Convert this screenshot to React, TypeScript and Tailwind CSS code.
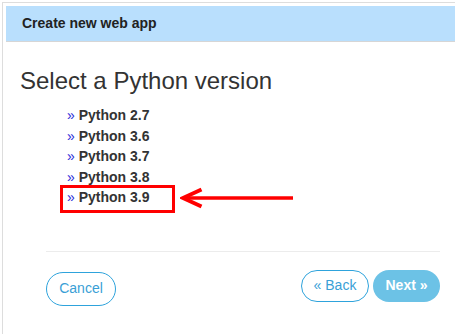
const versions = ['2.7', '3.6', '3.7', '3.8', '3.9'];

export default function App() {
  return (
    <div className="h-[334px] w-[455px] overflow-hidden bg-white font-['Liberation_Sans',Arial,sans-serif]">
      <div className="ml-[2px] mt-[2px] h-[400px] w-[480px] border-l border-t border-[#dddddd] p-[3px]">
        {/* header band */}
        <div className="flex h-[36px] items-center border-b border-[#d6d6d6] bg-[#b9dffd] pl-[16px] text-[14px] font-bold text-[#222]">
          Create new web app
        </div>

        <div className="relative pt-[25px]">
          <h1 className="ml-[14px] text-[24px] leading-[28px] text-[#333]">Select a Python version</h1>

          <ul className="mt-[10px] pl-[61px] text-[14px] leading-[20.5px]">
            {versions.map((v) => (
              <li key={v}>
                <span className="text-[#2b2bd8]">» </span>
                <span className="font-bold text-[#333]">Python {v}</span>
              </li>
            ))}
          </ul>

          {/* highlight box + arrow */}
          <div className="absolute left-[54px] top-[143px] h-[28px] w-[115px] border-[3px] border-[#ff0000]" />
          <svg className="absolute left-[174px] top-[144px]" width="116" height="25" viewBox="0 0 116 25">
            <line x1="3" y1="12" x2="113" y2="12" stroke="#ff0000" strokeWidth="3.5" />
            <polyline points="21.5,3.5 3,12 21.5,20.5" fill="none" stroke="#ff0000" strokeWidth="4" strokeLinejoin="miter" />
          </svg>

          <div className="ml-[40px] mt-[43px] h-px w-[394px] bg-[#ececec]" />

          <div className="ml-[40px] flex w-[394px] items-start justify-between pt-[18px] text-[14px]">
            <button className="mt-[2px] h-[34px] w-[70px] rounded-full border border-[#2ea3dc] text-[#3a9fd6]">
              Cancel
            </button>
            <div className="flex gap-[4px]">
              <button className="h-[32px] w-[68px] rounded-full border border-[#2ea3dc] text-[#3a9fd6]">
                « Back
              </button>
              <button className="h-[32px] w-[67px] rounded-full bg-[#6cc2e6] font-bold text-white">
                Next »
              </button>
            </div>
          </div>
        </div>
      </div>
    </div>
  );
}
